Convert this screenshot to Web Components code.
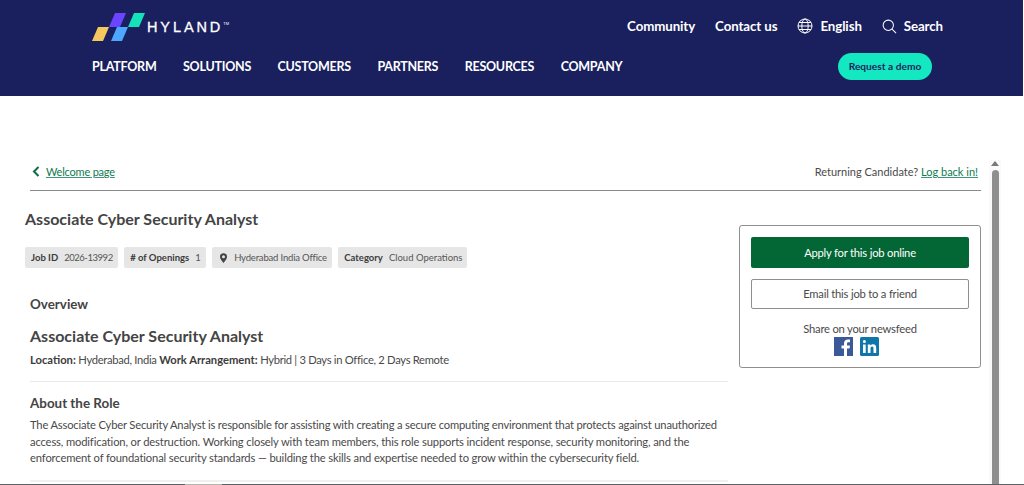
<!DOCTYPE html>
<html lang="en">
<head>
<meta charset="utf-8">
<title>Associate Cyber Security Analyst</title>
<style>
  html, body { margin: 0; height: 100%; overflow: hidden; background: #fff; }
  body { font-family: Lato, "Open Sans", sans-serif; }
</style>
</head>
<body>
<hy-header></hy-header>
<job-page>
  <back-bar slot="bar"></back-bar>
  <job-details slot="main"></job-details>
  <apply-card slot="side"></apply-card>
</job-page>

<script>
/* Site header: logo, utility links, main nav, demo button */
class HyHeader extends HTMLElement {
  constructor() {
    super();
    this.attachShadow({ mode: 'open' });
  }

  connectedCallback() {
    const nav = ['PLATFORM', 'SOLUTIONS', 'CUSTOMERS', 'PARTNERS', 'RESOURCES', 'COMPANY'];
    this.shadowRoot.innerHTML = `
      <style>
        :host {
          display: block;
          height: 96px;
          box-sizing: border-box;
          margin-right: 1px;
          padding: 10px 80px 0 91px;
          background: #1a1f5e;
          color: #fff;
        }
        .top { display: flex; align-items: center; justify-content: space-between; height: 30px; }
        .logo { display: flex; align-items: center; gap: 2px; }
        .word { font-family: "Liberation Sans", sans-serif; font-size: 14.5px; letter-spacing: 2.9px; line-height: 1; margin-top: 4px; -webkit-text-stroke: 0.3px #fff; }
        .tm { font-size: 4px; vertical-align: 7px; letter-spacing: 0; -webkit-text-stroke: 0; }
        .util { display: flex; align-items: center; font-size: 13.3px; font-weight: 700; letter-spacing: -0.1px; padding-top: 2px; }
        .util span { display: inline-flex; align-items: center; gap: 7px; margin-left: 20px; }
        .bottom { display: flex; align-items: center; justify-content: space-between; margin-top: 13px; padding-right: 11px; }
        nav { display: flex; gap: 26.5px; font-size: 12.5px; font-weight: 700; letter-spacing: -0.25px; padding-left: 1px; }
        .demo {
          box-sizing: border-box;
          padding-bottom: 1px;
          background: #14e8c0;
          color: #1a1f5e;
          border-radius: 14px;
          font-size: 10.2px;
          font-weight: 700;
          width: 94px;
          height: 27px;
          display: flex;
          align-items: center;
          justify-content: center;
        }
      </style>
      <div class="top">
        <div class="logo">
          <svg width="54" height="32" viewBox="0 0 54 32">
            <path d="M24 4 H35 L29 18 H18 Z" fill="#6a44ff"/>
            <path d="M43 4 H54 L48 18 H37 Z" fill="#14e3b9"/>
            <path d="M7 18 H18 L12 32 H1 Z" fill="#f5c85f"/>
            <path d="M26 18 H37 L31 32 H20 Z" fill="#4da6ff"/>
          </svg>
          <span class="word">HYLAND<span class="tm">TM</span></span>
        </div>
        <div class="util">
          <span>Community</span>
          <span>Contact us</span>
          <span>
            <svg width="16" height="16" viewBox="0 0 16 16" fill="none" stroke="#fff" stroke-width="1">
              <circle cx="8" cy="8" r="7"/><ellipse cx="8" cy="8" rx="3.2" ry="7"/>
              <path d="M1 8 H15 M2 4.5 H14 M2 11.5 H14"/>
            </svg>English</span>
          <span>
            <svg width="15" height="15" viewBox="0 0 16 16" fill="none" stroke="#fff" stroke-width="1.1">
              <circle cx="6.7" cy="6.7" r="5.5"/><path d="M10.7 10.7 L15 15"/>
            </svg>Search</span>
        </div>
      </div>
      <div class="bottom">
        <nav>${nav.map(n => `<span>${n}</span>`).join('')}</nav>
        <div class="demo">Request a demo</div>
      </div>
    `;
  }
}

/* Layout of the embedded job board: bar, two columns, inner scrollbar */
class JobPage extends HTMLElement {
  constructor() {
    super();
    this.attachShadow({ mode: 'open' });
    this.shadowRoot.innerHTML = `
      <style>
        :host { display: flex; height: 389px; box-sizing: border-box; padding: 64px 0 0 25px; overflow: hidden; position: relative; }
        .content { width: 956px; flex: none; }
        .cols { display: flex; gap: 11px; }
        .main { width: 703px; flex: none; }
        .side { width: 242px; flex: none; }
        .scroll { width: 12px; margin-left: 8px; background: #fafafa; display: flex; flex-direction: column; align-items: center; flex: none; }
        .arrow { width: 0; height: 0; border: 4px solid transparent; border-top: 0; border-bottom: 5px solid #777; margin: 1px 0 4px; }
        .thumb { flex: 1; width: 7px; background: #8f8f8f; border-radius: 4px 4px 0 0; }
        .edge {
          position: absolute; left: 0; right: 0; bottom: 0; height: 1px;
          background: linear-gradient(to right, #5c6366 185px, #b5b5ae 185px, #b5b5ae 222px, #5c6366 222px);
        }
      </style>
      <div class="content">
        <slot name="bar"></slot>
        <div class="cols">
          <div class="main"><slot name="main"></slot></div>
          <div class="side"><slot name="side"></slot></div>
        </div>
      </div>
      <div class="scroll"><div class="arrow"></div><div class="thumb"></div></div>
      <div class="edge"></div>
    `;
  }
}

class BackBar extends HTMLElement {
  constructor() {
    super();
    this.attachShadow({ mode: 'open' });
    this.shadowRoot.innerHTML = `
      <style>
        :host {
          display: flex;
          justify-content: space-between;
          align-items: flex-start;
          box-sizing: border-box;
          height: 31px;
          padding-top: 4px;
          margin-left: 5px;
          border-bottom: 1px solid #8a8a8a;
          font-size: 11px;
          line-height: 15px;
          color: #4a4a4a;
        }
        a { color: #0f7a50; text-decoration: underline; text-decoration-color: #3a9a78; }
        .back { display: flex; align-items: center; gap: 6px; padding-left: 2px; }
        .back a { letter-spacing: -0.2px; }
        .right { padding-right: 3px; }
      </style>
      <span class="back">
        <svg width="8" height="11" viewBox="0 0 8 11" fill="none" stroke="#0f6b45" stroke-width="2"><path d="M6.5 1 L2 5.5 L6.5 10"/></svg>
        <a>Welcome page</a>
      </span>
      <span class="right">Returning Candidate? <a>Log back in!</a></span>
    `;
  }
}

class JobTag extends HTMLElement {
  constructor() {
    super();
    this.attachShadow({ mode: 'open' });
    this.shadowRoot.innerHTML = `
      <style>
        :host {
          display: inline-flex;
          align-items: center;
          gap: 6px;
          height: 21px;
          padding: 0 5px 0 6px;
          background: #e6e6e6;
          border-radius: 2px;
          font-size: 9.5px;
          color: #555;
          white-space: nowrap;
        }
      </style>
      <slot></slot>
    `;
  }
}

class JobDetails extends HTMLElement {
  constructor() {
    super();
    this.attachShadow({ mode: 'open' });
    this.shadowRoot.innerHTML = `
      <style>
        :host { display: block; color: #4a4a4a; }
        h1 { font-size: 16px; font-weight: 700; margin: 0; padding-top: 18px; line-height: 20px; color: #444; }
        .tags { display: flex; gap: 6.4px; margin-top: 18px; }
        b { color: #3c3c3c; font-weight: 700; letter-spacing: 0; }
        .nums { letter-spacing: -0.45px; }
        .tight { letter-spacing: -0.18px; }
        .body { padding-left: 5px; }
        h2 { font-size: 13.4px; font-weight: 700; margin: 0; line-height: 18px; color: #444; }
        h3 { font-size: 16px; font-weight: 700; margin: 12px 0 0; line-height: 22px; color: #444; }
        p { font-size: 11.2px; margin: 0; line-height: 16.3px; letter-spacing: -0.14px; white-space: nowrap; }
        p.loc { letter-spacing: -0.3px; }
        .line1 { letter-spacing: -0.18px; }
        hr { border: 0; border-top: 1px solid #e9e9e9; margin: 0; }
      </style>
      <h1>Associate Cyber Security Analyst</h1>
      <div class="tags">
        <job-tag><b>Job ID</b> <span class="nums">2026-13992</span></job-tag>
        <job-tag><b># of Openings</b> <span>1</span></job-tag>
        <job-tag>
          <svg width="9" height="10" viewBox="0 0 9 10" style="margin-left:1px"><path fill-rule="evenodd" d="M4.5 10 C3 7.8 1 6 1 3.7 A3.5 3.5 0 0 1 8 3.7 C8 6 6 7.8 4.5 10 Z M4.5 2.2 A1.5 1.5 0 1 0 4.5 5.2 A1.5 1.5 0 1 0 4.5 2.2 Z" fill="#444"/></svg>
          <span class="tight">Hyderabad India Office</span>
        </job-tag>
        <job-tag><b>Category</b> <span>Cloud Operations</span></job-tag>
      </div>
      <div class="body">
        <h2 style="margin-top:27px">Overview</h2>
        <h3>Associate Cyber Security Analyst</h3>
        <p class="loc" style="margin-top:5px"><b>Location:</b> Hyderabad, India <b>Work Arrangement:</b> Hybrid | 3 Days in Office, 2 Days Remote</p>
        <hr style="margin-top:13px">
        <h2 style="margin-top:12px">About the Role</h2>
        <p style="margin-top:5px"><span class="line1">The Associate Cyber Security Analyst is responsible for assisting with creating a secure computing environment that protects against unauthorized</span><br>access, modification, or destruction. Working closely with team members, this role supports incident response, security monitoring, and the<br>enforcement of foundational security standards — building the skills and expertise needed to grow within the cybersecurity field.</p>
        <hr style="margin-top:14px;border-top-width:2px;border-color:#f0f0f0">
      </div>
    `;
  }
}

class ApplyCard extends HTMLElement {
  constructor() {
    super();
    this.attachShadow({ mode: 'open' });
    this.shadowRoot.innerHTML = `
      <style>
        :host {
          display: block;
          box-sizing: border-box;
          margin-top: 34px;
          height: 143px;
          padding: 11px;
          border: 1px solid #8f8f8f;
          border-radius: 3px;
          font-size: 11.2px;
          letter-spacing: -0.2px;
          color: #4a4a4a;
          text-align: center;
        }
        .btn { height: 31px; box-sizing: border-box; border-radius: 2px; display: flex; align-items: center; justify-content: center; padding-bottom: 1px; }
        .apply { background: #036635; color: #fff; }
        .email { border: 1px solid #8f8f8f; margin-top: 11px; height: 30px; }
        .share { margin-top: 13px; line-height: 14px; }
        .icons { display: flex; justify-content: center; gap: 7px; margin-top: 1px; margin-left: -8px; }
      </style>
      <div class="btn apply">Apply for this job online</div>
      <div class="btn email">Email this job to a friend</div>
      <div class="share">Share on your newsfeed</div>
      <div class="icons">
        <svg width="19" height="19" viewBox="0 0 19 19"><rect width="19" height="19" fill="#3b5998"/><path d="M13 19 V11.5 H15.5 L16 8.5 H13 V6.8 C13 5.9 13.3 5.3 14.5 5.3 H16 V2.6 C15.6 2.5 14.8 2.5 13.9 2.5 C11.6 2.5 10 3.9 10 6.4 V8.5 H7.5 V11.5 H10 V19 Z" fill="#fff"/></svg>
        <svg width="19" height="19" viewBox="0 0 19 19"><rect width="19" height="19" rx="1.5" fill="#0e76a8"/><path d="M3 7.5 H5.7 V16 H3 Z M4.35 3 A1.55 1.55 0 1 1 4.35 6.1 A1.55 1.55 0 1 1 4.35 3 Z M7.8 7.5 H10.3 V8.7 C10.8 7.9 11.7 7.3 13 7.3 C15.4 7.3 16.2 8.8 16.2 11.1 V16 H13.5 V11.6 C13.5 10.5 13.2 9.6 12.1 9.6 C11 9.6 10.5 10.5 10.5 11.6 V16 H7.8 Z" fill="#fff"/></svg>
      </div>
    `;
  }
}

customElements.define('hy-header', HyHeader);
customElements.define('job-page', JobPage);
customElements.define('back-bar', BackBar);
customElements.define('job-tag', JobTag);
customElements.define('job-details', JobDetails);
customElements.define('apply-card', ApplyCard);
</script>
</body>
</html>
